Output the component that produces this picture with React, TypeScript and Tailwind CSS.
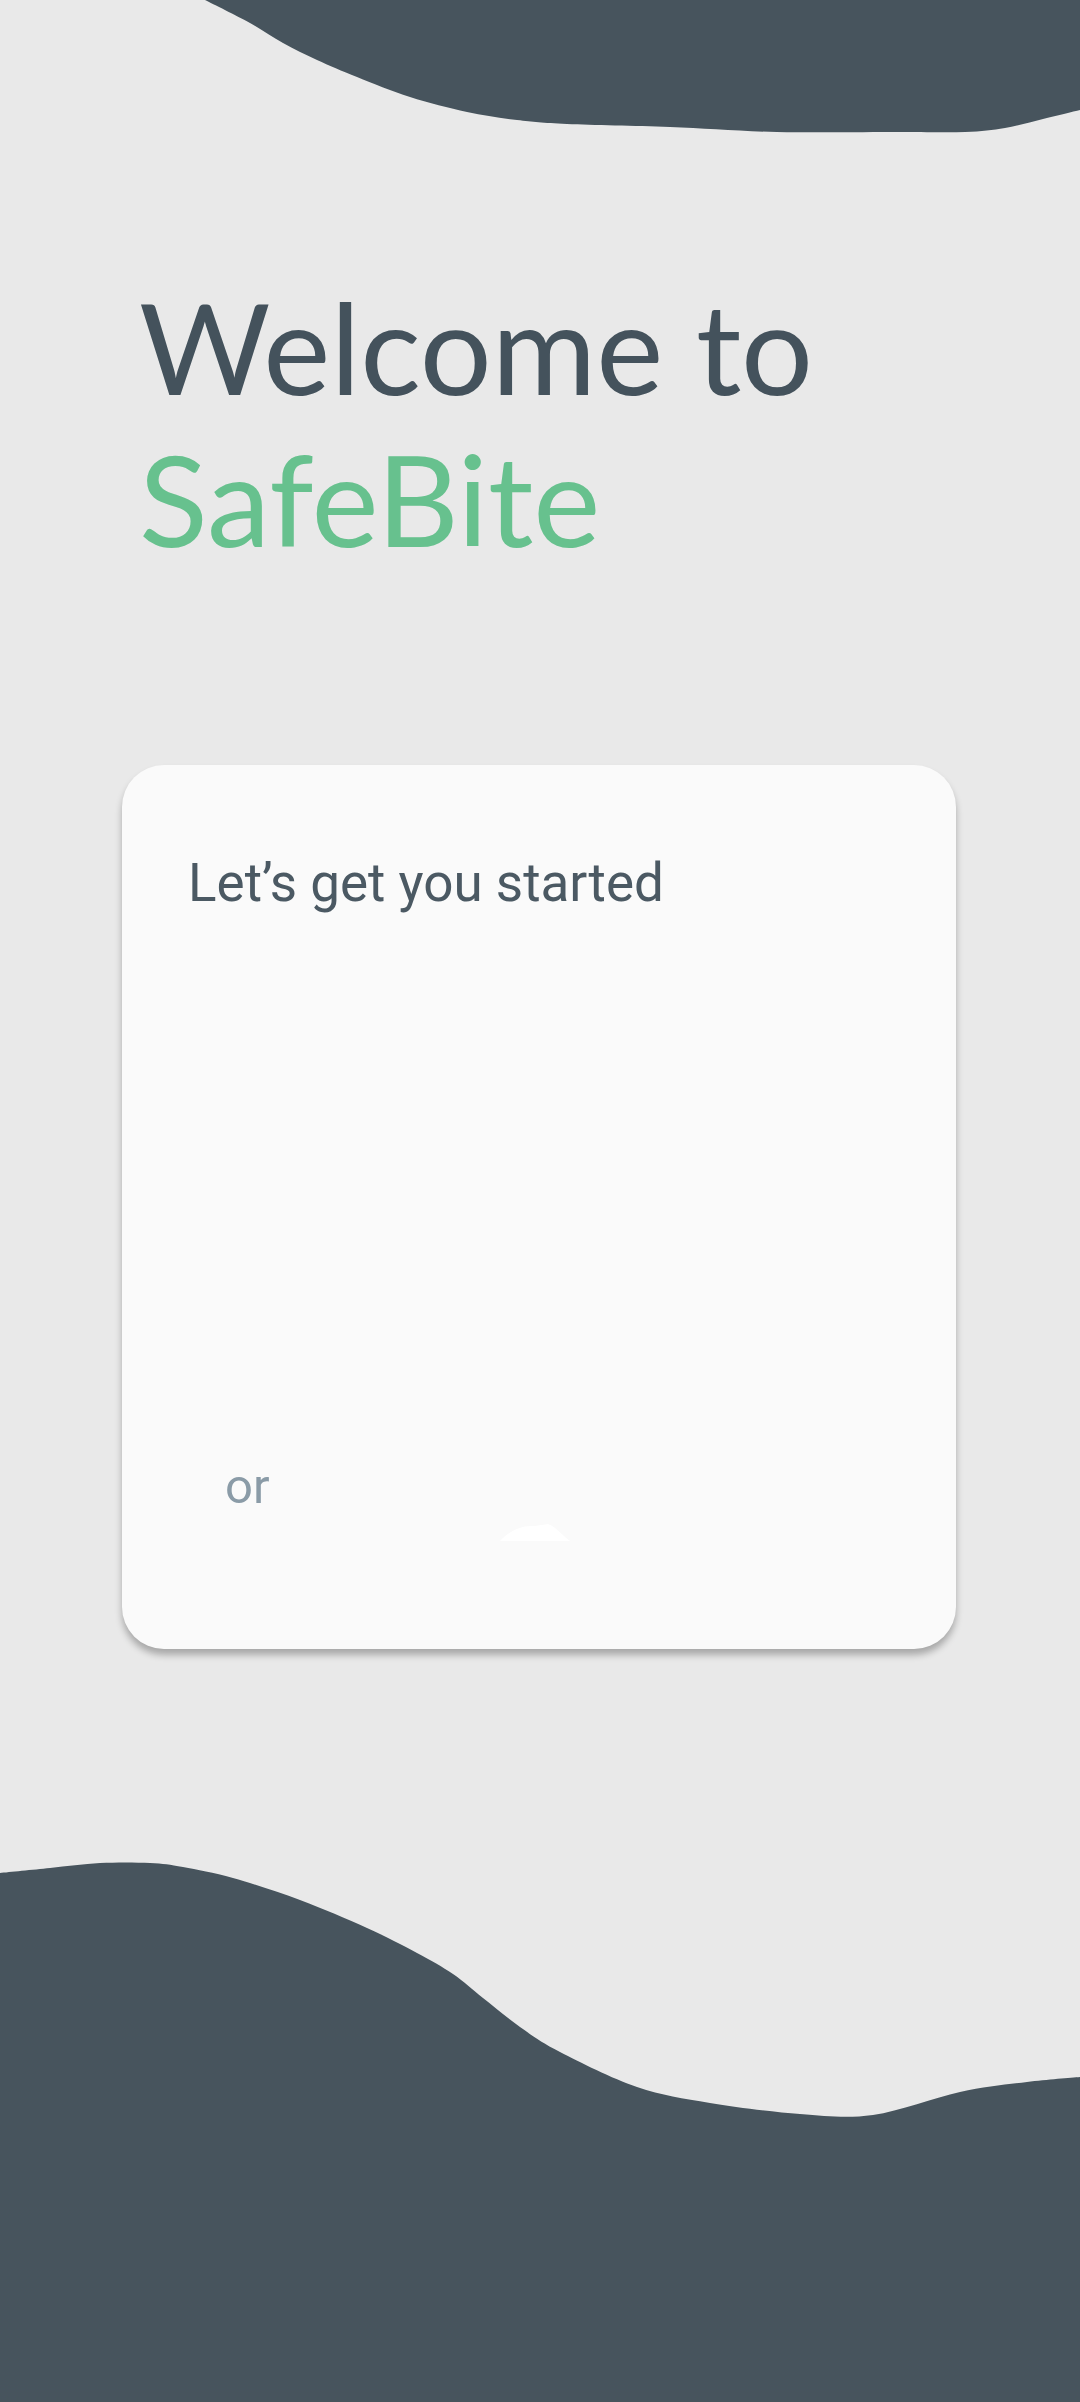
type Pt = [number, number];

// catmull-rom -> cubic bezier, for the smooth wave edges
function smooth(points: Pt[]): string {
  let d = `M${points[0][0]},${points[0][1]}`;
  for (let i = 0; i < points.length - 1; i++) {
    const p0 = points[i - 1] || points[i];
    const p1 = points[i];
    const p2 = points[i + 1];
    const p3 = points[i + 2] || p2;
    const c1x = p1[0] + (p2[0] - p0[0]) / 6;
    const c1y = p1[1] + (p2[1] - p0[1]) / 6;
    const c2x = p2[0] - (p3[0] - p1[0]) / 6;
    const c2y = p2[1] - (p3[1] - p1[1]) / 6;
    d += ` C${c1x.toFixed(1)},${c1y.toFixed(1)} ${c2x.toFixed(1)},${c2y.toFixed(1)} ${p2[0]},${p2[1]}`;
  }
  return d;
}

const topEdge: Pt[] = [
  [205, 0], [250, 23], [283, 43], [317, 60], [357, 77], [410, 97],
  [467, 112], [517, 120], [567, 124], [670, 127], [777, 132], [900, 132],
  [965, 132], [1005, 128], [1043, 119], [1080, 110],
];

// local y = page y - 1850
const bottomEdge: Pt[] = [
  [0, 23], [50, 18], [100, 13], [150, 13], [183, 17], [233, 28], [300, 50],
  [367, 78], [417, 103], [453, 124], [483, 148], [520, 177], [560, 202],
  [637, 237], [710, 253], [800, 264], [873, 265], [960, 242], [1027, 232],
  [1080, 227],
];

function TopWave() {
  return (
    <svg className="absolute left-0 top-0" width="1080" height="140" viewBox="0 0 1080 140">
      <path d={`${smooth(topEdge)} L1080,0 Z`} fill="#47545d" />
    </svg>
  );
}

function BottomWave() {
  return (
    <svg className="absolute left-0 top-[1850px]" width="1080" height="552" viewBox="0 0 1080 552">
      <path d={`${smooth(bottomEdge)} L1080,552 L0,552 Z`} fill="#47545d" />
    </svg>
  );
}

export default function App() {
  return (
    <div className="relative w-[1080px] h-[2402px] overflow-hidden bg-[#e9e9e9]">
      <TopWave />
      <BottomWave />

      <div className="relative flex flex-col">
        <h1
          className="mt-[270px] pl-[139px] text-[127px] leading-[152px] font-normal text-[#44525c]"
          style={{ fontFamily: 'Lato, sans-serif' }}
        >
          Welcome to
          <br />
          <span className="text-[#67c18e]">SafeBite</span>
        </h1>

        <div className="mt-[191px] ml-[122px] w-[834px] h-[884px] rounded-[42px] bg-[#fafafa] shadow-[0_6px_7px_rgba(0,0,0,0.28)] flex flex-col pt-[88px] pl-[66px]">
          <p
            className="text-[53px] leading-[61px] text-[#4b5963]"
            style={{ fontFamily: 'Roboto, sans-serif' }}
          >
            Let’s get you started
          </p>
          <p
            className="mt-[545px] ml-[37px] text-[49px] leading-[56px] text-[#8a9ba7]"
            style={{ fontFamily: 'Roboto, sans-serif' }}
          >
            or
          </p>
          <svg className="ml-[312px] mt-[8px]" width="160" height="20" viewBox="0 0 160 20">
            <path d="M0,18 C10,8 20,2 35,3 L48,1 C56,4 62,12 70,18 Z" fill="#ffffff" />
          </svg>
        </div>
      </div>
    </div>
  );
}
